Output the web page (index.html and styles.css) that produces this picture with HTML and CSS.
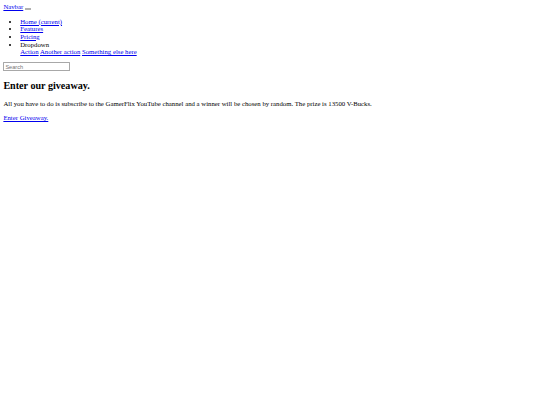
FILE: index.html
```html
<!DOCTYPE html>
<html>
<head>
<meta charset="utf-8">
<title>Giveaway</title>
<link rel="stylesheet" href="styles.css">
</head>
<body class="page-body">
<nav class="navbar">
  <a class="navbar-brand" href="#">Navbar</a>
  <button class="navbar-toggler" type="button"></button>
  <div class="navbar-collapse">
    <ul class="navbar-nav">
      <li class="nav-item"><a class="nav-link" href="#">Home (current)</a></li>
      <li class="nav-item"><a class="nav-link" href="#">Features</a></li>
      <li class="nav-item"><a class="nav-link" href="#">Pricing</a></li>
      <li class="nav-item">
        <span class="dropdown-toggle">Dropdown</span>
        <div class="dropdown-menu">
          <a class="dropdown-item" href="#">Action</a>
          <a class="dropdown-item" href="#">Another action</a>
          <a class="dropdown-item" href="#">Something else here</a>
        </div>
      </li>
    </ul>
    <form class="search-form">
      <input class="search-input" type="search" placeholder="Search" aria-label="Search">
    </form>
  </div>
</nav>
<h2 class="title">Enter our giveaway.</h2>
<p class="text">All you have to do is subscribe to the GamerFlix YouTube channel and a winner will be chosen by random. The prize is 13500 V-Bucks.</p>
<p class="text"><a class="link" href="#">Enter Giveaway.</a></p>
</body>
</html>
```
FILE: styles.css
```css
.page-body {
  margin: 3.375px;
  font-family: "Liberation Serif", "Times New Roman", serif;
  font-size: 6.75px;
  line-height: 7.6px;
  color: #000;
  background: #fff;
}
.navbar-brand,
.nav-link,
.dropdown-item,
.link {
  color: #0000ee;
  text-decoration: underline;
}
.navbar-toggler {
  display: inline-block;
  width: 6.5px;
  height: 2px;
  padding: 0;
  margin: 0;
  border: 0.5px solid #b0b0b0;
  background: #e4e4e4;
  vertical-align: baseline;
  box-sizing: border-box;
}
.navbar-nav {
  margin: 6.75px 0;
  padding-left: 16.875px;
  list-style: disc;
}
.dropdown-toggle {
  color: #000;
}
.search-form {
  margin: 0;
  line-height: 8.9px;
}
.search-input {
  display: inline-block;
  box-sizing: border-box;
  width: 67px;
  height: 8.9px;
  margin: 0;
  padding: 0 1px;
  border: 1px solid #a8a8a8;
  border-radius: 0.5px;
  font-family: "Liberation Sans", Arial, sans-serif;
  font-size: 5.625px;
  line-height: 6.9px;
  background: #fff;
  color: #000;
  outline: none;
  vertical-align: top;
}
.search-input::placeholder {
  color: #757575;
}
.title {
  font-size: 10.125px;
  line-height: 11.65px;
  font-weight: bold;
  margin: 8.4px 0;
}
.text {
  margin: 6.75px 0;
}
```
